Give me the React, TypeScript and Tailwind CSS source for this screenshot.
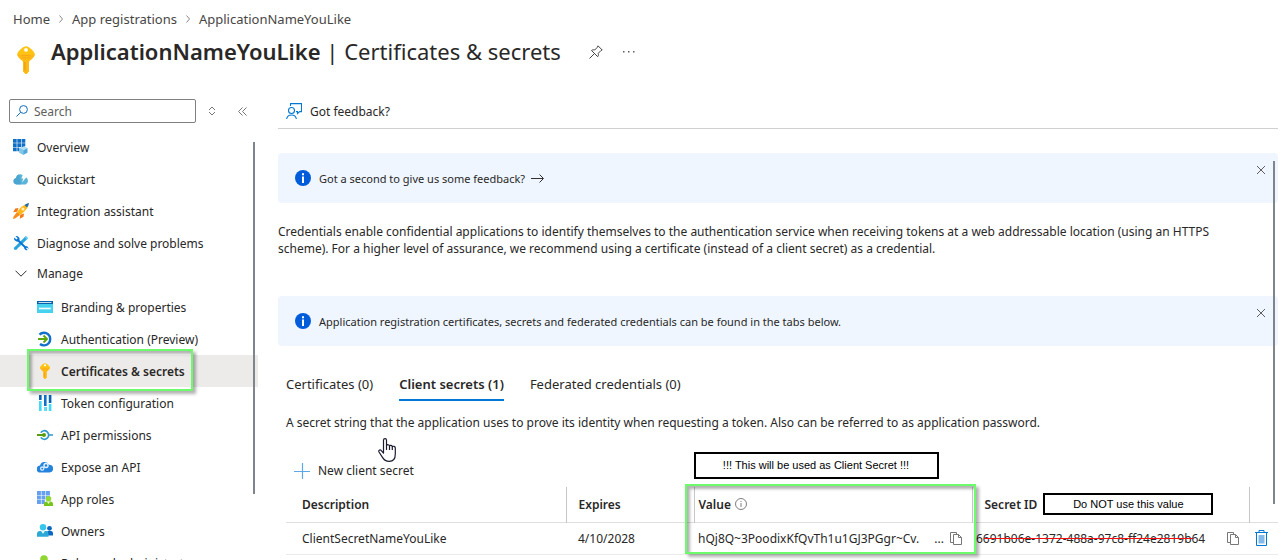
import type { ReactNode } from "react";

const KeyIcon = ({ className }: { className: string }) => (
  <svg viewBox="0 0 18 28" className={className} aria-hidden="true">
    <path d="M7 .8a4 4 0 0 1 4 0c2 1 4.500 3.200 6 5.400a3.400 3.400 0 0 1 .1 4c-1 1.600-2.600 3.200-4.300 4.400-.5.400-.8.900-.8 1.500v9.100l-1.700 2.100a1.700 1.700 0 0 1-2.600 0L6 25.200v-9.100c0-.6-.3-1.100-.8-1.500C3.500 13.400 1.900 11.800.9 10.200a3.400 3.400 0 0 1 .1-4C2.500 4 5 1.800 7 .8z" fill="#ffc412" />
    <path d="M.3 8.500h17.400c0 .6-.2 1.200-.6 1.700-1 1.600-2.600 3.200-4.300 4.400-.5.400-.8.900-.8 1.500v9.100l-1.700 2.100a1.700 1.700 0 0 1-2.600 0L6 25.200v-9.100c0-.6-.3-1.100-.8-1.500C3.500 13.400 1.900 11.800.9 10.200a3 3 0 0 1-.6-1.700z" fill="#fdb515" opacity=".65" />
    <circle cx="9" cy="3.900" r="1.900" fill="#fff" />
    <rect x="4.500" y="9" width="9" height="1.100" rx=".5" fill="#f7a61b" />
    <rect x="4.500" y="11.200" width="9" height="1.100" rx=".5" fill="#f7a61b" />
    <rect x="7.300" y="16" width="1.300" height="8.500" rx=".6" fill="#f29a16" />
  </svg>
);

const Svg = ({ children }: { children: ReactNode }) => (
  <svg viewBox="0 0 16 16" className="size-4 shrink-0" aria-hidden="true">
    {children}
  </svg>
);

const icons: Record<string, ReactNode> = {
  overview: (
    <Svg>
      <path d="M0 0h3.700v3.700H0zM4.300 0H8v3.700H4.300zM8.600 0h3.700v3.700H8.600zM0 4.300h3.700V8H0zM4.300 4.300H8V8H4.300zM8.600 4.300h3.700V7L10.500 8H8.600zM0 8.600h3.700v3.700H0zM4.300 8.600h2v3.700h-2z" fill="#0f6fc6" />
      <path d="m10.500 7.500 4 1.800v4.400l-4 2-4-2V9.300z" fill="#50a9dc" />
      <path d="m10.500 7.500 4 1.800-4 2-4-2z" fill="#b5dff5" />
      <path d="M10.500 11.300v4.400l-4-2V9.300z" fill="#83c6e8" />
    </Svg>
  ),
  quickstart: (
    <Svg>
      <path d="M3.400 13.400A3.300 3.300 0 0 1 3 6.900a4.400 4.400 0 0 1 8.300-1.100A4 4 0 0 1 12.600 13.400z" fill="#5ab4d9" />
      <path d="M3.400 13.400A3.300 3.300 0 0 1 3 6.900 4.300 4.300 0 0 1 6 3.200l2 10.200z" fill="#3f9dcb" opacity=".6" />
      <path d="M10.200 2.500h2.600l-1.500 3.300h2.300l-4.500 5.600 1.100-4H8.400z" fill="#fff" />
    </Svg>
  ),
  integration: (
    <Svg>
      <path d="M5.500 5 2.200 5.500.2 9.200l4-.4zM11 10.500l-.5 3.300-3.700 2 .4-4z" fill="#f27a1a" />
      <path d="M3 13.500 4.500 8.500C7 4.500 11 1.500 16 0c-1 5-4.500 9-8.500 11.500z" fill="#ffb715" />
      <path d="M4 9 7 12 2 15.500 0 16l.6-2.500z" fill="#f78d1e" />
      <path d="M11.500 1.900C13 1 14.500.4 16 0c-.3 1.700-1 3.200-1.900 4.600z" fill="#176fb8" />
      <circle cx="10" cy="6" r="1.600" fill="#fff1b8" />
    </Svg>
  ),
  diagnose: (
    <Svg>
      <path d="m12.600 1.200 2.200 2.200-9.800 9.500-1.800 2-2.200-.3-.2-1.800 2-1.700z" fill="#2ba6dc" />
      <path d="M12.800.8 15.300 3.300 13.800 4.500 11.600 2.300z" fill="#67cbed" />
      <path d="M2.500 1.200 4.700 3.300 3.500 4.600 1.200 2.500A3.400 3.400 0 0 0 5 6.700l6 5.800a2.900 2.900 0 0 0 3.700 2.600l-1.600-1.600.9-.9 1.500 1.500A2.800 2.800 0 0 0 12.300 11L6.500 5.200A3.300 3.300 0 0 0 2.500 1.200z" fill="#0878d4" />
    </Svg>
  ),
  branding: (
    <Svg>
      <rect y="2" width="16" height="12" rx=".6" fill="#46d1ef" />
      <path d="M0 2h16v3H0z" fill="#0862ab" />
      <path d="M1.500 3.200h13v.8h-13z" fill="#fff" />
      <path d="M2 8.500h12v2H2z" fill="#b8eefb" />
      <path d="m2 10 1-1 1 1 1-1 1 1 1-1 1 1 1-1 1 1 1-1 1 1 1-1" fill="none" stroke="#fff" strokeWidth=".8" />
    </Svg>
  ),
  authentication: (
    <Svg>
      <path d="M2.500 3.600A6.300 6.300 0 1 1 3 13" fill="none" stroke="#1170cb" strokeWidth="2.400" />
      <path d="M1 8h8.500M6.500 4.500 10 8l-3.500 3.500" fill="none" stroke="#5ca612" strokeWidth="1.900" />
    </Svg>
  ),
  certificates: <KeyIcon className="size-4 shrink-0" />,
  token: (
    <Svg>
      <path d="M2 0h2.600v6H2zM11.800 0h2.600v9h-2.600z" fill="#0963b5" />
      <path d="M2 6h2.600v10H2zM11.800 9h2.600v7h-2.600z" fill="#43d8f5" />
      <path d="M7 0h2.600v16H7z" fill="#0d71c8" />
      <path d="M7 12h2.600v4H7z" fill="#65dff6" />
      <path d="M1.500 5h3.600v1H1.500zM6.500 11h3.600v1H6.500zM11.300 8h3.600v1h-3.600z" fill="#fff" />
    </Svg>
  ),
  permissions: (
    <Svg>
      <path d="M3.800 5.600a4.300 4.300 0 1 1 0 4.800M12 8h4" fill="none" stroke="#3098cb" strokeWidth="1.700" />
      <path d="M0 8h6" stroke="#5b9e0d" strokeWidth="2" />
      <circle cx="7" cy="8" r="2" fill="#5b9e0d" />
    </Svg>
  ),
  expose: (
    <Svg>
      <path d="M3.500 13.600A3.500 3.500 0 0 1 3 6.600a4.700 4.700 0 0 1 8.900-.8 3.900 3.900 0 0 1 .6 7.800z" fill="#2583dc" />
      <circle cx="9" cy="6.500" r="2" fill="none" stroke="#e4f3ff" strokeWidth="1.400" />
      <circle cx="5.200" cy="9.600" r="1.600" fill="none" stroke="#d2eaff" strokeWidth="1.300" />
    </Svg>
  ),
  roles: (
    <Svg>
      <path d="M0 0h3.900v3.900H0zM4.500 0h3.900v3.900H4.500zM9 0h3.900v3.900H9zM0 4.500h3.900v3.900H0zM4.500 4.500h3.900v3.900H4.500zM9 4.500h3.900v3H9zM0 9h3.900v3.900H0zM4.500 9h3.300v3.900H4.500z" fill="#659ff0" />
      <circle cx="11.500" cy="7.700" r="2.800" fill="#93d934" />
      <path d="M7 15V13a2.500 2.500 0 0 1 2.500-2.500h4A2.500 2.500 0 0 1 16 13v2z" fill="#77c51b" />
      <path d="m9.800 10.500 1.700 2.500 1.700-2.500z" fill="#e7f7ce" />
    </Svg>
  ),
  owners: (
    <Svg>
      <circle cx="12.500" cy="5.300" r="2.400" fill="#0a68c0" />
      <path d="M9.500 12.500V10A2 2 0 0 1 11.500 8h2A2.200 2.200 0 0 1 16 10v2.500z" fill="#0a68c0" />
      <circle cx="6" cy="4.300" r="3.200" fill="#37c5eb" />
      <path d="M0 13.800V11a3 3 0 0 1 3-3h6a2.800 2.800 0 0 1 2.500 3v2.800z" fill="#2ba9d6" />
      <path d="m4 8 2 2.700L8 8z" fill="#e5f8fd" />
    </Svg>
  ),
  admins: (
    <Svg>
      <circle cx="7" cy="4" r="3.800" fill="#90d631" />
      <path d="M1 16v-4a3 3 0 0 1 3-3h6a3 3 0 0 1 3 3v4z" fill="#76bc2d" />
    </Svg>
  ),
};

const topItems = [
  { label: "Overview", icon: "overview" },
  { label: "Quickstart", icon: "quickstart" },
  { label: "Integration assistant", icon: "integration" },
  { label: "Diagnose and solve problems", icon: "diagnose" },
];

const manageItems = [
  { label: "Branding & properties", icon: "branding" },
  { label: "Authentication (Preview)", icon: "authentication" },
  { label: "Certificates & secrets", icon: "certificates", selected: true },
  { label: "Token configuration", icon: "token" },
  { label: "API permissions", icon: "permissions" },
  { label: "Expose an API", icon: "expose" },
  { label: "App roles", icon: "roles" },
  { label: "Owners", icon: "owners" },
  { label: "Roles and administrators", icon: "admins" },
];

const Highlight = ({ className }: { className: string }) => (
  <div
    className={`pointer-events-none absolute z-10 border-2 border-[#6bfb6b] shadow-[3px_3px_3px_rgba(0,0,0,0.3),inset_3px_3px_3px_rgba(0,0,0,0.3)] ${className}`}
  />
);

const CrumbSeparator = () => (
  <svg viewBox="0 0 6 8" className="mx-2 h-2 w-1.5" fill="none" stroke="#8a8886" aria-hidden="true">
    <path d="m1.500.5 3 3.500-3 3.500" />
  </svg>
);

const CopyButton = ({ label }: { label: string }) => (
  <button type="button" aria-label={label} className="shrink-0">
    <svg viewBox="0 0 12 13" className="h-[13px] w-3" fill="none" stroke="#797775" aria-hidden="true">
      <path d="M3.500 10.500h-3V.5h6v2M3.500 2.500h5l3 3v7h-8zM8.500 2.500v3h3" />
    </svg>
  </button>
);

const Banner = ({ children }: { children: ReactNode }) => (
  <div className="flex h-[50px] items-center rounded-sm bg-[#eff6ff] pl-[17px] text-[11px]">
    <svg viewBox="0 0 16 16" className="mr-2 size-4" aria-hidden="true">
      <circle cx="8" cy="8" r="8" fill="#015cda" />
      <path d="M7 6.500h2V13H7zM7 3.200h2v2H7z" fill="#fff" />
    </svg>
    {children}
    <button type="button" aria-label="Dismiss" className="mt-3 mr-3 ml-auto self-start">
      <svg viewBox="0 0 10 10" className="size-[10px]" fill="none" stroke="#605e5c" aria-hidden="true">
        <path d="m1 1 8 8M9 1 1 9" />
      </svg>
    </button>
  </div>
);

function Sidebar() {
  return (
    <aside className="relative w-[258px] shrink-0 pt-[3px]">
      <div className="flex h-6 items-center pl-[9px]">
        <label htmlFor="menu-search" className="flex h-6 w-[187px] items-center rounded-xs border border-[#808080] pl-[6px]">
          <svg viewBox="0 0 12 12" className="size-3 shrink-0" fill="none" stroke="#0f6cbd" aria-hidden="true">
            <circle cx="7.500" cy="4.500" r="3.900" />
            <path d="M4.700 7.300.5 11.500" />
          </svg>
          <input
            id="menu-search"
            type="text"
            aria-label="Search"
            placeholder="Search"
            className="ml-1.5 h-5 w-full min-w-0 outline-none placeholder:text-[#605e5c]"
          />
        </label>
        <button type="button" aria-label="Expand all" className="ml-3">
          <svg viewBox="0 0 8 10" className="h-[10px] w-2" fill="none" stroke="#797775" aria-hidden="true">
            <path d="m1 4 3-3 3 3M1 6l3 3 3-3" />
          </svg>
        </button>
        <button type="button" aria-label="Collapse menu" className="ml-[22px]">
          <svg viewBox="0 0 9 9" className="size-[9px]" fill="none" stroke="#797775" aria-hidden="true">
            <path d="M4.500.5.500 4.500l4 4M8.500.5l-4 4 4 4" />
          </svg>
        </button>
      </div>
      <nav className="mt-2">
        {topItems.map((item) => (
          <a key={item.label} href="#" className="flex h-8 items-center gap-2 pl-[13px]">
            {icons[item.icon]}
            {item.label}
          </a>
        ))}
        <button type="button" className="flex h-8 w-full items-center gap-[10px] pb-1 pl-[15px]">
          <svg viewBox="0 0 12 7" className="h-[7px] w-3" fill="none" stroke="#323130" aria-hidden="true">
            <path d="m.5.7 5.500 5.500L11.500.7" />
          </svg>
          Manage
        </button>
        {manageItems.map((item) => (
          <a
            key={item.label}
            href="#"
            className={`relative flex h-8 items-center gap-2 pl-[37px] ${item.selected ? "bg-[#edebe9] font-semibold" : ""}`}
          >
            {icons[item.icon]}
            {item.label}
            {item.selected && <Highlight className="-top-[6px] left-[27px] h-[42px] w-[166px]" />}
          </a>
        ))}
      </nav>
      <div className="absolute top-[46px] right-[3px] h-[352px] w-0.5 bg-[#7f858a]" />
    </aside>
  );
}

function SecretsTable() {
  return (
    <table className="w-full table-fixed border-collapse text-left">
      <colgroup>
        <col />
        <col className="w-32" />
        <col className="w-[278px]" />
        <col className="w-[277px]" />
        <col className="w-[29px]" />
      </colgroup>
      <thead>
        <tr className="h-[35px] border-b border-[#e1dfdd]">
          <th className="border-r border-[#c8c6c4] pl-4 font-semibold">Description</th>
          <th className="border-r border-[#c8c6c4] pl-3 font-semibold">Expires</th>
          <th className="relative border-r border-[#c8c6c4] pl-1 font-semibold">
            <div className="flex items-center gap-1">
              Value
              <svg viewBox="0 0 12 12" className="size-3" fill="none" stroke="#605e5c" strokeWidth=".8" aria-hidden="true">
                <circle cx="6" cy="6" r="5.500" />
                <path d="M6 5v4M6 3v1" />
              </svg>
            </div>
            <Highlight className="-top-[3px] -left-[10px] h-[70px] w-[291px]" />
            <div className="absolute -top-[35px] -left-px h-[27px] w-[245px] border-2 border-black bg-white text-center font-['Liberation_Sans',sans-serif] text-[11px] leading-[23px] font-normal text-black">
              !!! This will be used as Client Secret !!!
            </div>
          </th>
          <th className="border-r border-[#c8c6c4] pl-3 font-semibold">
            <div className="flex items-center gap-1.5 whitespace-nowrap">
              Secret ID
              <div className="h-[22px] w-[170px] border-2 border-black text-center font-['Liberation_Sans',sans-serif] text-[11px] leading-[18px] font-normal text-black">
                Do NOT use this value
              </div>
            </div>
          </th>
          <th aria-label="Actions" />
        </tr>
      </thead>
      <tbody>
        <tr className="h-8 border-b border-[#edebe9]">
          <td className="pl-4">ClientSecretNameYouLike</td>
          <td className="pl-3">4/10/2028</td>
          <td className="pr-[10px] pl-1">
            <div className="flex items-center gap-1.5">
              <span>hQj8Q~3PoodixKfQvTh1u1GJ3PGgr~Cv.</span>
              <span className="ml-auto">...</span>
              <CopyButton label="Copy value" />
            </div>
          </td>
          <td className="pr-[10px] pl-1">
            <div className="flex items-center justify-between">
              <span className="relative">
                6691b06e-1372-488a-97c8-ff24e2819b64
                <span className="absolute top-1/2 right-3 left-2 h-px bg-[#fb0d0d]" />
              </span>
              <CopyButton label="Copy secret ID" />
            </div>
          </td>
          <td className="pl-1.5">
            <button type="button" aria-label="Delete secret" className="block">
              <svg viewBox="0 0 13 16" className="h-4 w-[13px]" fill="none" stroke="#0078d4" aria-hidden="true">
                <path d="M0 2.500h13M4 2.500v-2h5v2M1.500 2.500v13h10v-13" />
                <path d="M3.500 5h6v8.500h-6z" fill="#83baec" stroke="none" />
              </svg>
            </button>
          </td>
        </tr>
      </tbody>
    </table>
  );
}

export default function App() {
  return (
    <div className="flex h-screen flex-col overflow-hidden bg-white font-['Noto_Sans',sans-serif] text-xs leading-[17px] text-[#292827]">
      <header className="pt-[10px]">
        <nav aria-label="Breadcrumb" className="flex h-[18px] items-center pl-[13px] text-[13px] text-[#484644]">
          <a href="#">Home</a>
          <CrumbSeparator />
          <a href="#">App registrations</a>
          <CrumbSeparator />
          <a href="#">ApplicationNameYouLike</a>
        </nav>
        <div className="mt-2 flex h-8 items-center pl-[17px]">
          <KeyIcon className="mt-4 mr-4 h-7 w-[18px]" />
          <h1 className="pb-0.5 text-[22px] whitespace-nowrap">
            <span className="font-semibold">ApplicationNameYouLike</span> | Certificates &amp; secrets
          </h1>
          <button type="button" aria-label="Pin" className="ml-7">
            <svg viewBox="0 0 14 14" className="size-[14px]" fill="none" stroke="#484644" aria-hidden="true">
              <path d="m9 .8 4.200 4.200-1.200.5-2.800 2.900c.5 1.300.2 2.500-.5 3.300L2.500 5.500c.9-.8 2-.9 3.200-.5l2.700-2.800zM5.500 8.500.5 13.500" />
            </svg>
          </button>
          <button type="button" aria-label="More" className="ml-5">
            <svg viewBox="0 0 12 2" className="h-0.5 w-3" fill="#605e5c" aria-hidden="true">
              <path d="M0 0h1.500v1.500H0zM5 0h1.500v1.500H5zM10 0h1.500v1.500H10z" />
            </svg>
          </button>
        </div>
      </header>

      <div className="mt-7 flex min-h-0 flex-1">
        <Sidebar />
        <main className="relative min-w-0 flex-1 pr-[10px] pl-5">
          <div className="flex h-[33px] items-center border-b border-[#d2d0ce] pb-0.5 pl-2">
            <button type="button" className="flex items-center gap-2">
              <svg viewBox="0 0 16 16" className="size-4" fill="none" stroke="#0078d4" strokeWidth="1.100" aria-hidden="true">
                <path d="M4.500 3V.6h11v8h-1.800l-2.200 2V8.600H10" />
                <circle cx="5.500" cy="7.500" r="3" />
                <path d="M.6 16a5 5 0 0 1 9.800 0" />
              </svg>
              Got feedback?
            </button>
          </div>

          <div className="mt-6">
            <Banner>
              <a href="#" className="flex items-center gap-1.5">
                Got a second to give us some feedback?
                <svg viewBox="0 0 13 9" className="h-[9px] w-[13px]" fill="none" stroke="#323130" aria-hidden="true">
                  <path d="M0 4.500h12M8.500.5l4 4-4 4" />
                </svg>
              </a>
            </Banner>
          </div>

          <p className="mt-5 mr-10">
            Credentials enable confidential applications to identify themselves to the authentication service when
            receiving tokens at a web addressable location (using an HTTPS scheme). For a higher level of assurance, we
            recommend using a certificate (instead of a client secret) as a credential.
          </p>

          <div className="mt-[39px]">
            <Banner>
              <span>Application registration certificates, secrets and federated credentials can be found in the tabs below.</span>
            </Banner>
          </div>

          <div className="pl-2">
            <div role="tablist" className="mt-[27px] flex gap-[26px] text-[13px]">
              <button type="button" role="tab" aria-selected="false" className="h-7 pb-1.5">Certificates (0)</button>
              <button type="button" role="tab" aria-selected="true" className="h-7 border-b-2 border-[#0078d4] pb-1 font-semibold">
                Client secrets (1)
              </button>
              <button type="button" role="tab" aria-selected="false" className="h-7 pb-1.5">Federated credentials (0)</button>
            </div>
            <p className="mt-[13px]">
              A secret string that the application uses to prove its identity when requesting a token. Also can be
              referred to as application password.
            </p>
            <div className="relative mt-[31px] mb-2 flex h-[17px] items-center pl-2">
              <button type="button" className="flex items-center gap-2">
                <svg viewBox="0 0 16 16" className="size-4" fill="none" stroke="#5ea9e5" aria-hidden="true">
                  <path d="M8.500 0v16M0 8.500h16" strokeWidth="1.200" />
                </svg>
                New client secret
              </button>
              <svg viewBox="0 0 18 24" className="absolute -top-6 left-[92px] h-6 w-[18px]" fill="#fff" stroke="#1b1b2f" strokeWidth="1.200" strokeLinejoin="round" aria-hidden="true">
                <path d="M5.500 15V2.200C5.500.2 8.500.2 8.500 2.200v5.300c.5-1.200 2.800-1 3 .5.500-1 2.600-.7 2.800.7.800-.9 3-.4 3 1.300v6c0 4.500-2 7.400-6 7.400-3.600 0-5.300-1.400-7-4.300L1 14c-.8-1.600.8-2.700 2-1.700z" />
                <path d="M8.500 7.500V12M11.500 8v4M14.300 8.700V12" fill="none" />
              </svg>
            </div>
            <SecretsTable />
          </div>
          <div className="absolute top-[65px] right-[13px] h-[343px] w-0.5 bg-[#7f858a]" />
        </main>
      </div>
    </div>
  );
}
